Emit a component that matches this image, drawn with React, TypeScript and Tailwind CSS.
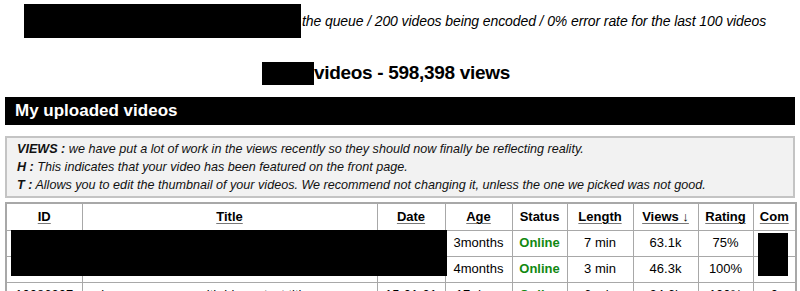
const headers = [
	{ label: 'ID', link: true, w: 'w-[76px]' },
	{ label: 'Title', link: true, w: 'w-[295px]' },
	{ label: 'Date', link: true, w: 'w-[68px]' },
	{ label: 'Age', link: true, w: 'w-[67px]' },
	{ label: 'Status', link: false, w: 'w-[55px]' },
	{ label: 'Length', link: true, w: 'w-[66px]' },
	{ label: 'Views ↓', link: true, w: 'w-[65px]' },
	{ label: 'Rating', link: true, w: 'w-[55px]' },
	{ label: 'Com', link: true, w: 'w-[43px]' },
]

const rows = [
	{ id: '', title: '', date: '', age: '3months', status: 'Online', length: '7 min', views: '63.1k', rating: '75%', com: '' },
	{ id: '', title: '', date: '', age: '4months', status: 'Online', length: '3 min', views: '46.3k', rating: '100%', com: '' },
	{ id: '10086307', title: 'a long song name with bigger text title', date: '15-01-31', age: '17 days', status: 'Online', length: '6 min', views: '24.6k', rating: '100%', com: '0' },
]

export default function App() {
	return (
		<div className="w-[800px] h-[291px] overflow-hidden bg-white text-black font-['Liberation_Sans',Arial,sans-serif]">
			{/* Encoding status line */}
			<div className="flex items-center pl-[24px] pt-[4px] h-[38px]">
				<div className="w-[277px] h-[34px] bg-black" />
				<p className="text-[14px] italic ml-[1px] tracking-[-0.1px]">
					the queue / 200 videos being encoded / 0% error rate for the last 100 videos
				</p>
			</div>

			{/* Totals */}
			<div className="flex items-center justify-center mt-[11px] h-[48px] pr-[28px]">
				<div className="w-[52px] h-[23px] bg-black" />
				<h2 className="text-[19px] font-bold tracking-[-0.3px]">videos - 598,398 views</h2>
			</div>

			{/* Section bar */}
			<div className="mx-[5px] h-[28px] bg-black flex items-center pl-[10px]">
				<h1 className="text-white font-bold text-[17px]">My uploaded videos</h1>
			</div>

			{/* Notes */}
			<div className="mx-[5px] mt-[11px] border-2 border-[#c4c4c4] bg-[#f2f2f2] px-[10px] py-[2px] text-[12.6px] italic leading-[18px] text-[#111]">
				<p><b>VIEWS :</b> we have put a lot of work in the views recently so they should now finally be reflecting reality.</p>
				<p><b>H :</b> This indicates that your video has been featured on the front page.</p>
				<p><b>T :</b> Allows you to edit the thumbnail of your videos. We recommend not changing it, unless the one we picked was not good.</p>
			</div>

			{/* Video table */}
			<div className="relative mx-[5px] mt-[4px]">
				<table className="w-[790px] table-fixed border-collapse border-2 border-[#a8a8a8] text-[13px]">
					<colgroup>
						{headers.map((h) => (
							<col key={h.label} className={h.w} />
						))}
					</colgroup>
					<thead>
						<tr className="h-[27px]">
							{headers.map((h) => (
								<th key={h.label} className="border border-[#a8a8a8] font-bold text-center">
									<span className={h.link ? 'underline underline-offset-2 decoration-[#777]' : ''}>{h.label}</span>
								</th>
							))}
						</tr>
					</thead>
					<tbody>
						{rows.map((r, i) => (
							<tr key={i} className="h-[26px]">
								<td className="border border-[#a8a8a8] text-center">{r.id}</td>
								<td className="border border-[#a8a8a8] px-[8px]">{r.title}</td>
								<td className="border border-[#a8a8a8] text-center">{r.date}</td>
								<td className="border border-[#a8a8a8] text-center">{r.age}</td>
								<td className="border border-[#a8a8a8] text-center font-bold text-[#118811]">{r.status}</td>
								<td className="border border-[#a8a8a8] text-center">{r.length}</td>
								<td className="border border-[#a8a8a8] text-center">{r.views}</td>
								<td className="border border-[#a8a8a8] text-center">{r.rating}</td>
								<td className="border border-[#a8a8a8] text-center">{r.com}</td>
							</tr>
						))}
					</tbody>
				</table>
				{/* redactions over the first two rows */}
				<div className="absolute left-[6px] top-[28px] w-[436px] h-[46px] bg-black" />
				<div className="absolute left-[753px] top-[31px] w-[30px] h-[43px] bg-black" />
			</div>
		</div>
	)
}
